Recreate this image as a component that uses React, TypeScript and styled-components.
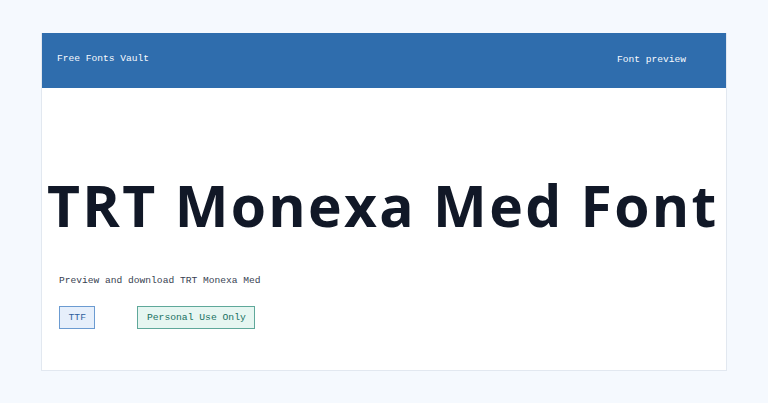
import styled, { createGlobalStyle } from 'styled-components';

const GlobalStyle = createGlobalStyle`
  html, body {
    margin: 0;
    padding: 0;
    background: #f5f9fe;
  }
  body {
    font-family: 'Liberation Mono', 'DejaVu Sans Mono', monospace;
  }
`;

const Page = styled.div`
  padding: 33px 40px 0 41px;
  height: 403px;
  box-sizing: border-box;
`;

const Card = styled.div`
  width: 686px;
  height: 338px;
  box-sizing: border-box;
  background: #fff;
  border: 1px solid #e2e8f0;
  border-top: none;
  display: flex;
  flex-direction: column;
`;

const Header = styled.header`
  height: 55px;
  background: #2f6dad;
  color: #f8fbff;
  display: flex;
  align-items: center;
  justify-content: space-between;
  padding: 0 40px 0 15px;
  font-size: 9.6px;
`;

const Brand = styled.div`
  margin-top: -5px;
`;

const Nav = styled.div`
  margin-top: -3px;
`;

const Body = styled.main`
  flex: 1;
  display: flex;
  flex-direction: column;
  padding: 0 17px;
`;

const Title = styled.h1`
  margin: 82px 0 0 -12px;
  font-family: 'Open Sans', 'Noto Sans', sans-serif;
  font-weight: 700;
  font-size: 57px;
  line-height: 70px;
  color: #111827;
  white-space: nowrap;
  letter-spacing: 2.3px;
`;

const Lead = styled.p`
  margin: 35px 0 0;
  font-size: 9.6px;
  color: #374151;
`;

const Tags = styled.div`
  display: flex;
  gap: 42px;
  margin-top: 20px;
`;

const Tag = styled.span<{ $tone: 'blue' | 'green' }>`
  display: inline-flex;
  align-items: center;
  height: 23px;
  box-sizing: border-box;
  padding: 0 8.5px;
  font-size: 9.7px;
  border: 1px solid ${(p) => (p.$tone === 'blue' ? '#6b9bd1' : '#5fa89a')};
  background: ${(p) => (p.$tone === 'blue' ? '#e6effb' : '#e6f6f1')};
  color: ${(p) => (p.$tone === 'blue' ? '#2f5f9e' : '#17705f')};
`;

export default function App() {
  return (
    <>
      <GlobalStyle />
      <Page>
        <Card>
          <Header>
            <Brand>Free Fonts Vault</Brand>
            <Nav>Font preview</Nav>
          </Header>
          <Body>
            <Title>TRT Monexa Med Font</Title>
            <Lead>Preview and download TRT Monexa Med</Lead>
            <Tags>
              <Tag $tone="blue">TTF</Tag>
              <Tag $tone="green">Personal Use Only</Tag>
            </Tags>
          </Body>
        </Card>
      </Page>
    </>
  );
}
